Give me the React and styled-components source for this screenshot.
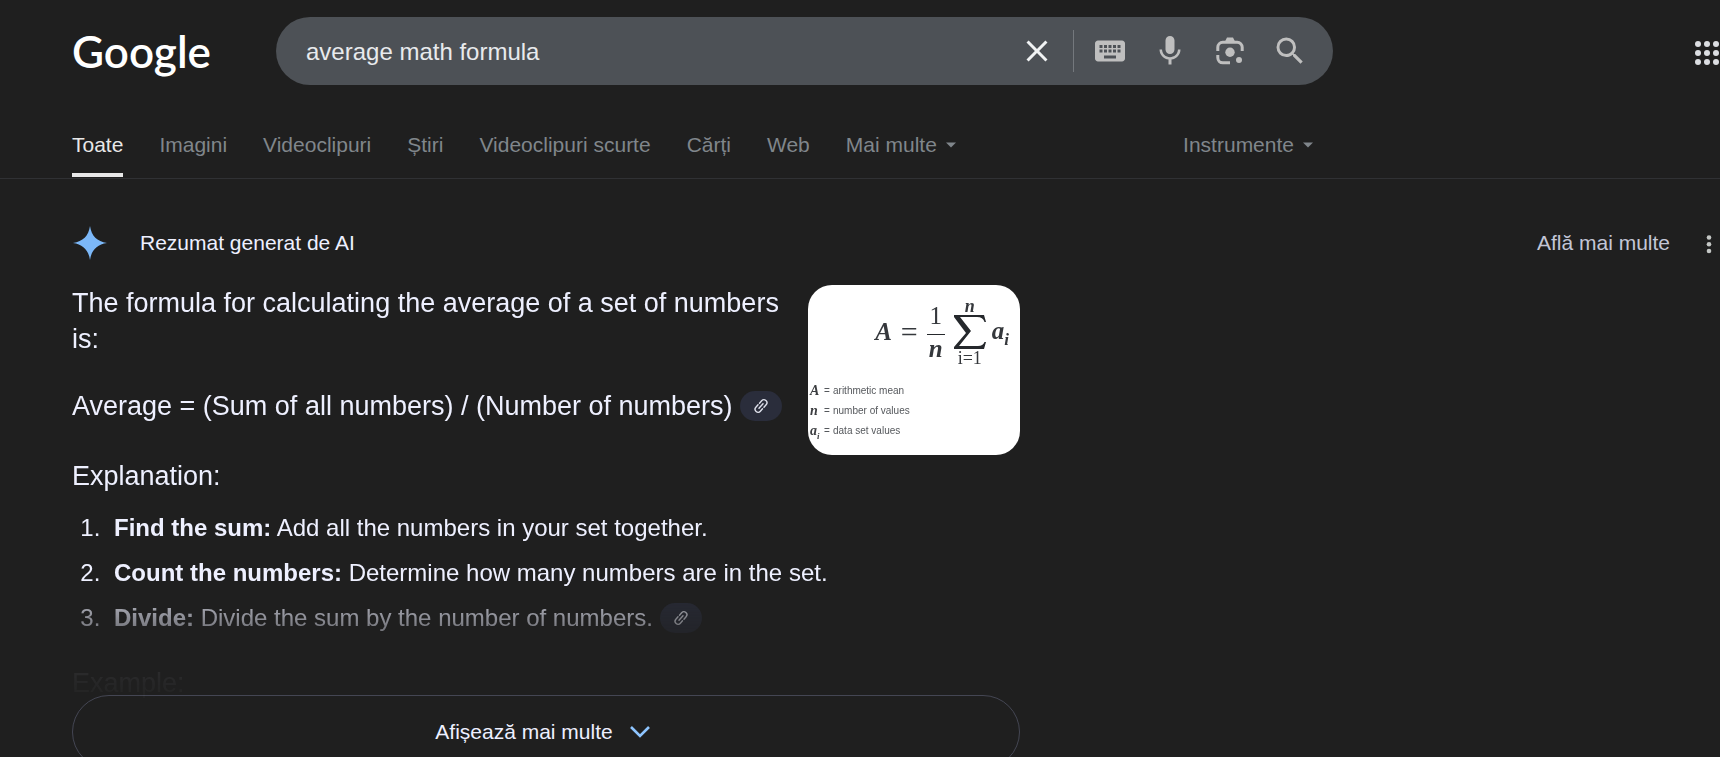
import { useState } from 'react';
import styled, { createGlobalStyle } from 'styled-components';
import { MdClose, MdKeyboard, MdMic, MdSearch } from 'react-icons/md';

const tabs = [
  'Toate',
  'Imagini',
  'Videoclipuri',
  'Știri',
  'Videoclipuri scurte',
  'Cărți',
  'Web',
];

const steps = [
  { title: 'Find the sum:', text: 'Add all the numbers in your set together.' },
  {
    title: 'Count the numbers:',
    text: 'Determine how many numbers are in the set.',
  },
  {
    title: 'Divide:',
    text: 'Divide the sum by the number of numbers.',
    source: true,
  },
];

const LensIcon = () => (
  <svg width="36" height="36" viewBox="0 0 36 36" fill="none">
    <path
      d="M5.8 18v-3.700a5 5 0 0 1 5-5h14.400a5 5 0 0 1 5 5V18M5.800 22v2.800a5 5 0 0 0 5 5H18"
      stroke="currentColor"
      strokeWidth="3"
    />
    <path d="M13 8.500 15 4.500h6l2 4z" fill="currentColor" />
    <circle cx="18" cy="19.300" r="4.700" fill="currentColor" />
    <circle cx="27" cy="27" r="3" fill="currentColor" />
  </svg>
);

const AppsIcon = () => (
  <svg width="26" height="26" viewBox="0 0 26 26" fill="currentColor">
    {[4, 13, 22].map((cy) =>
      [4, 13, 22].map((cx) => <circle key={`${cx}-${cy}`} cx={cx} cy={cy} r="3" />)
    )}
  </svg>
);

const KebabIcon = () => (
  <svg width="24" height="24" viewBox="0 0 24 24" fill="currentColor">
    <circle cx="13" cy="6.500" r="2.300" />
    <circle cx="13" cy="13.200" r="2.300" />
    <circle cx="13" cy="20" r="2.300" />
  </svg>
);

const SparkIcon = () => (
  <svg width="36" height="36" viewBox="0 0 36 36" fill="#7cb8f8">
    <path d="M18 1C19.500 11 25 16.500 35 18C25 19.500 19.500 25 18 35C16.500 25 11 19.500 1 18C11 16.500 16.500 11 18 1Z" />
  </svg>
);

const LinkIcon = () => (
  <svg width="18" height="18" viewBox="0 0 18 18" fill="none">
    <g
      transform="rotate(-48 9 9)"
      stroke="currentColor"
      strokeWidth="1.400"
      strokeLinecap="round"
    >
      <path d="M7.900 12H4.700a3 3 0 0 1 0-6H7.900M10.100 6h3.200a3 3 0 0 1 0 6h-3.200M6 9h6" />
    </g>
  </svg>
);

const Caret = () => (
  <svg width="10" height="6" viewBox="0 0 10 6" fill="currentColor">
    <path d="M0 .5h10L5 5.500z" />
  </svg>
);

const Chevron = () => (
  <svg width="22" height="14" viewBox="0 0 22 14" fill="none">
    <path d="M2 2l9 9 9-9" stroke="#8ec5ff" strokeWidth="2.600" />
  </svg>
);

const SourceLink = () => (
  <SourceBtn type="button" aria-label="Surse">
    <LinkIcon />
  </SourceBtn>
);

const FormulaCard = () => (
  <Card href="#formula">
    <Equation>
      <i>A</i>
      <Equals>=</Equals>
      <Fraction>
        <span>1</span>
        <i>n</i>
      </Fraction>
      <Sum>
        <i>n</i>
        <svg width="32" height="36" viewBox="0 0 32 36">
          <path
            d="M0 1H30L32 8H30.500Q29 3 23 3H6L17 17 5 32H24Q29 32 30.500 28H32L30 35H0V33L12 19 0 3Z"
            fill="#25282c"
          />
        </svg>
        <span>i=1</span>
      </Sum>
      <i>
        a<sub>i</sub>
      </i>
    </Equation>
    <Legend>
      <i>A</i>
      <span>=</span>
      <span>arithmetic mean</span>
      <i>n</i>
      <span>=</span>
      <span>number of values</span>
      <i>
        a<sub>i</sub>
      </i>
      <span>=</span>
      <span>data set values</span>
    </Legend>
  </Card>
);

const App = () => {
  const [query, setQuery] = useState('average math formula');
  const [active, setActive] = useState('Toate');

  return (
    <Page>
      <GlobalStyle />
      <Header>
        <Logo href="#home">Google</Logo>
        <SearchForm role="search" onSubmit={(e) => e.preventDefault()}>
          <SearchInput
            type="text"
            aria-label="Caută"
            value={query}
            onChange={(e) => setQuery(e.target.value)}
          />
          <IconBtn
            type="button"
            $bright
            aria-label="Șterge"
            onClick={() => setQuery('')}
          >
            <MdClose size={36} />
          </IconBtn>
          <Divider />
          <IconBtn type="button" aria-label="Tastatură">
            <MdKeyboard size={36} />
          </IconBtn>
          <IconBtn type="button" aria-label="Căutare vocală">
            <MdMic size={36} />
          </IconBtn>
          <IconBtn type="button" aria-label="Căutare după imagine">
            <LensIcon />
          </IconBtn>
          <IconBtn type="submit" aria-label="Caută">
            <MdSearch size={36} />
          </IconBtn>
        </SearchForm>
        <AppsBtn type="button" aria-label="Aplicații">
          <AppsIcon />
        </AppsBtn>
      </Header>

      <NavBar>
        <NavInner>
          {tabs.map((tab) => (
            <Tab
              key={tab}
              href="#tab"
              $active={tab === active}
              onClick={() => setActive(tab)}
            >
              {tab}
            </Tab>
          ))}
          <MenuBtn type="button">
            Mai multe <Caret />
          </MenuBtn>
          <Tools>
            <MenuBtn type="button">
              Instrumente <Caret />
            </MenuBtn>
          </Tools>
        </NavInner>
      </NavBar>

      <Main>
        <OverviewHead>
          <SparkIcon />
          <OverviewTitle>Rezumat generat de AI</OverviewTitle>
          <LearnMore href="#more">Află mai multe</LearnMore>
          <KebabBtn type="button" aria-label="Opțiuni">
            <KebabIcon />
          </KebabBtn>
        </OverviewHead>

        <Overview>
          <Faded>
            <Lead>
              <div>
                <Paragraph>
                  The formula for calculating the average of a set of numbers
                  is:
                </Paragraph>
                <Paragraph>
                  Average = (Sum of all numbers) / (Number of numbers)
                  <SourceLink />
                </Paragraph>
              </div>
              <FormulaCard />
            </Lead>
            <Subheading>Explanation:</Subheading>
            <Steps>
              {steps.map((step) => (
                <Step key={step.title}>
                  <strong>{step.title}</strong> {step.text}
                  {step.source && <SourceLink />}
                </Step>
              ))}
            </Steps>
            <Subheading>Example:</Subheading>
          </Faded>
          <ShowMore type="button">
            Afișează mai multe <Chevron />
          </ShowMore>
        </Overview>
      </Main>
    </Page>
  );
};

const GlobalStyle = createGlobalStyle`
  * {
    box-sizing: border-box;
  }
  body {
    margin: 0;
    background-color: #1f1f1f;
    font-family: 'Liberation Sans', Arial, sans-serif;
  }
  button {
    border: 0;
    padding: 0;
    background: none;
    color: inherit;
    font: inherit;
    cursor: pointer;
  }
  a {
    color: inherit;
    text-decoration: none;
  }
  svg {
    display: block;
    flex-shrink: 0;
  }
`;

const Page = styled.div`
  height: 100vh;
  overflow: hidden;
  color: #eef0ff;
`;

const Header = styled.header`
  display: flex;
  align-items: center;
  padding: 17px 0 17px 72px;
`;

const Logo = styled.a`
  flex: 0 0 204px;
  color: #fff;
  font-family: Lato, sans-serif;
  font-size: 44px;
  font-weight: 600;
  line-height: 68px;
`;

const SearchForm = styled.form`
  display: flex;
  align-items: center;
  flex: 0 1 1057px;
  height: 68px;
  padding: 0 13px 0 30px;
  border-radius: 34px;
  background-color: #4d5156;
`;

const SearchInput = styled.input`
  flex: 1;
  min-width: 0;
  padding: 2px 0 0;
  border: 0;
  outline: 0;
  background: none;
  color: #e8eaed;
  font: 24px/36px 'Liberation Sans', Arial, sans-serif;
`;

const IconBtn = styled.button`
  display: flex;
  justify-content: center;
  align-items: center;
  width: 60px;
  height: 60px;
  color: ${(props) => (props.$bright ? '#f1f3f4' : '#bfbfbf')};
`;

const Divider = styled.span`
  width: 1px;
  height: 42px;
  margin: 0 6px;
  background-color: #74787d;
`;

const AppsBtn = styled.button`
  margin-left: auto;
  padding-top: 4px;
  color: #dcdee2;
`;

const NavBar = styled.nav`
  border-bottom: 1px solid #303134;
`;

const NavInner = styled.div`
  display: flex;
  align-items: flex-start;
  gap: 36px;
  max-width: 1313px;
  padding: 28px 0 1px 72px;
  color: #80868b;
  font-size: 21px;
  line-height: 30px;
`;

const Tab = styled.a`
  padding-bottom: 13px;
  border-bottom: 4px solid ${(props) => (props.$active ? '#e8e8e8' : 'transparent')};
  color: ${(props) => (props.$active ? '#e8e8e8' : 'inherit')};
  white-space: nowrap;
`;

const MenuBtn = styled.button`
  display: flex;
  align-items: center;
  gap: 9px;
  white-space: nowrap;
`;

const Tools = styled.div`
  margin-left: auto;
`;

const Main = styled.main`
  padding: 46px 0 0 72px;
`;

const OverviewHead = styled.div`
  display: flex;
  align-items: center;
  margin-bottom: 24px;
  font-size: 21px;
  line-height: 36px;
`;

const OverviewTitle = styled.h1`
  margin: 0 0 0 32px;
  font-size: 21px;
  font-weight: 400;
`;

const LearnMore = styled.a`
  margin-left: auto;
  color: #c3c6d6;
`;

const KebabBtn = styled.button`
  margin-left: 26px;
  color: #c4c7c5;
`;

const Overview = styled.section`
  max-width: 948px;
`;

/* the last line of the preview runs slightly under the button */
const Faded = styled.div`
  height: 416px;
  margin-bottom: -6px;
  mask-image: linear-gradient(
    #000 302px,
    rgba(0, 0, 0, 0.68) 318px,
    rgba(0, 0, 0, 0.46) 340px,
    rgba(0, 0, 0, 0.06) 387px,
    rgba(0, 0, 0, 0.02) 410px
  );
`;

const Lead = styled.div`
  display: flex;
  justify-content: space-between;
  align-items: flex-start;
  gap: 20px;
  margin-bottom: 2px;
`;

const Paragraph = styled.p`
  margin: 0 0 31px;
  font-size: 27px;
  line-height: 36px;
`;

const SourceBtn = styled.button`
  display: inline-flex;
  justify-content: center;
  align-items: center;
  width: 42px;
  height: 30px;
  margin: 0 0 4px 7px;
  border-radius: 15px;
  background-color: #2a2d3b;
  color: #dfe1ec;
  vertical-align: middle;
`;

const Subheading = styled.h2`
  margin: 0;
  font-size: 27px;
  font-weight: 400;
  line-height: 36px;
`;

const Steps = styled.ol`
  display: flex;
  flex-direction: column;
  gap: 9px;
  margin: 16px 0 28px;
  padding-left: 35px;
  font-size: 24px;
  line-height: 36px;
`;

const Step = styled.li`
  padding-left: 7px;
`;

const Card = styled.a`
  flex: 0 0 212px;
  height: 170px;
  overflow: hidden;
  border-radius: 24px;
  background-color: #fff;
  color: #35383c;
  font-family: 'Liberation Serif', serif;
`;

const Equation = styled.div`
  display: flex;
  justify-content: flex-end;
  align-items: center;
  padding: 13px 11px 0 0;
  font-size: 25px;
  line-height: 28px;

  i {
    font-weight: 700;
  }

  sub {
    font-size: 17px;
    line-height: 1;
  }
`;

const Equals = styled.span`
  margin: 0 9px;
  font-size: 30px;
`;

const Fraction = styled.span`
  display: flex;
  flex-direction: column;
  align-items: center;
  width: 18px;
  margin-right: 9px;

  span {
    padding-bottom: 4px;
    border-bottom: 1px solid #25282c;
    width: 100%;
    text-align: center;
  }
`;

const Sum = styled.span`
  display: flex;
  flex-direction: column;
  align-items: center;
  margin-right: 6px;
  font-size: 18px;
  line-height: 16px;
`;

const Legend = styled.div`
  display: grid;
  grid-template-columns: 14px 9px auto;
  padding: 15px 0 0 2px;
  color: #55585c;
  font: 10px/20px 'Liberation Sans', Arial, sans-serif;

  i {
    color: #3c3e41;
    font-family: 'Liberation Serif', serif;
    font-size: 14px;
    font-weight: 700;
  }

  sub {
    font-size: 9px;
    line-height: 1;
  }
`;

const ShowMore = styled.button`
  display: flex;
  justify-content: center;
  align-items: center;
  gap: 16px;
  width: 100%;
  height: 74px;
  padding-right: 6px;
  border: 1px solid #444653;
  border-radius: 37px;
  font-size: 21px;
`;

export default App;
